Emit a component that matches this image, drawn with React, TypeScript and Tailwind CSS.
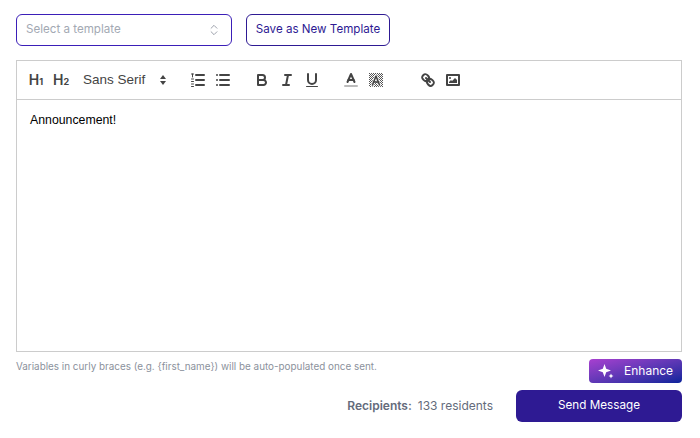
import { ChevronsUpDown } from "lucide-react";

const iconClass = "w-[18px] h-[18px] fill-none stroke-[#444] stroke-2 [stroke-linecap:round] [stroke-linejoin:round]";

function Heading({ n }: { n: string }) {
  return (
    <span className="flex w-[18px] items-baseline justify-center font-['Inter',sans-serif] font-semibold leading-none text-[#444]">
      <span className="text-[14px]">H</span>
      <span className="text-[9px] font-bold">{n}</span>
    </span>
  );
}

function OrderedList() {
  return (
    <svg viewBox="0 0 18 18" className={iconClass}>
      <line x1="7" x2="15" y1="4" y2="4" />
      <line x1="7" x2="15" y1="9" y2="9" />
      <line x1="7" x2="15" y1="14" y2="14" />
      <g className="stroke-1">
        <line x1="2.5" x2="4.5" y1="3" y2="3" />
        <line x1="3.5" x2="3.5" y1="3" y2="6" />
        <line x1="2.5" x2="4.5" y1="8" y2="8" />
        <line x1="2.5" x2="4.5" y1="10.5" y2="10.5" />
        <line x1="2.5" x2="4.5" y1="13" y2="13" />
        <line x1="2.5" x2="4.5" y1="15.5" y2="15.5" />
      </g>
    </svg>
  );
}

function BulletList() {
  return (
    <svg viewBox="0 0 18 18" className={iconClass}>
      <line x1="6" x2="15" y1="4" y2="4" />
      <line x1="6" x2="15" y1="9" y2="9" />
      <line x1="6" x2="15" y1="14" y2="14" />
      <line x1="3" x2="3" y1="4" y2="4" />
      <line x1="3" x2="3" y1="9" y2="9" />
      <line x1="3" x2="3" y1="14" y2="14" />
    </svg>
  );
}

function BoldIcon() {
  return (
    <svg viewBox="0 0 18 18" className={iconClass}>
      <path d="M5,4H9.5A2.5,2.5,0,0,1,12,6.5v0A2.5,2.5,0,0,1,9.5,9H5V4Z" />
      <path d="M5,9h5.5A2.5,2.5,0,0,1,13,11.5v0A2.5,2.5,0,0,1,10.5,14H5V9Z" />
    </svg>
  );
}

function ItalicIcon() {
  return (
    <svg viewBox="0 0 18 18" className={iconClass}>
      <line x1="7" x2="13" y1="4" y2="4" />
      <line x1="5" x2="11" y1="14" y2="14" />
      <line x1="8" x2="10" y1="14" y2="4" />
    </svg>
  );
}

function UnderlineIcon() {
  return (
    <svg viewBox="0 0 18 18" className={iconClass}>
      <path d="M5,3V9a4,4,0,0,0,4,4H9a4,4,0,0,0,4-4V3" />
      <rect x="3" y="15" width="12" height="1" rx="0.5" className="fill-[#444] stroke-0" />
    </svg>
  );
}

function ColorIcon() {
  return (
    <svg viewBox="0 0 18 18" className={iconClass}>
      <line x1="3" x2="15" y1="15" y2="15" className="stroke-[#bbb]" />
      <polyline points="5.5 11 9 3 12.5 11" />
      <line x1="11.63" x2="6.38" y1="9" y2="9" />
    </svg>
  );
}

function BackgroundIcon() {
  // checker of 1px dots behind the letter
  const dots: [number, number][] = [];
  for (let y = 2; y < 16; y++) {
    for (let x = 2; x < 16; x++) {
      if ((x + y) % 2 === 0) dots.push([x, y]);
    }
  }
  return (
    <svg viewBox="0 0 18 18" className={iconClass}>
      {dots.map(([x, y]) => (
        <rect key={`${x}-${y}`} x={x} y={y} width="1" height="1" className="fill-[#555] stroke-0" />
      ))}
      <polyline points="5.5 14 9 5 12.5 14" className="stroke-white stroke-[3]" />
      <polyline points="5.5 14 9 5 12.5 14" className="stroke-[1.6]" />
      <line x1="11.63" x2="6.38" y1="11" y2="11" className="stroke-[1.6]" />
    </svg>
  );
}

function LinkIcon() {
  return (
    <svg viewBox="0 0 18 18" className={iconClass}>
      <line x1="7" x2="11" y1="7" y2="11" />
      <path d="M8.9,4.577a3.476,3.476,0,0,1,.36,4.679A3.476,3.476,0,0,1,4.577,8.9C3.185,7.5,2.035,6.4,4.217,4.217S7.5,3.185,8.9,4.577Z" />
      <path d="M13.423,9.1a3.476,3.476,0,0,0-4.679-.36,3.476,3.476,0,0,0,.36,4.679c1.392,1.392,2.5,2.542,4.679.36S14.815,10.5,13.423,9.1Z" />
    </svg>
  );
}

function ImageIcon() {
  return (
    <svg viewBox="0 0 18 18" className={iconClass}>
      <rect x="3" y="4" width="12" height="10" />
      <circle cx="6" cy="7" r="1" className="fill-[#444] stroke-0" />
      <polyline points="5 12 5 11 7 9 8 10 11 7 13 9 13 12 5 12" className="fill-[#444] stroke-0" />
    </svg>
  );
}

function Sparkle() {
  return (
    <svg viewBox="0 0 18 18" className="w-[18px] h-[18px] fill-white">
      <path d="M7.5 2 L9.2 6.8 L14 8.5 L9.2 10.2 L7.5 15 L5.8 10.2 L1 8.5 L5.8 6.8 Z" />
      <path d="M14 11.5 L14.8 13.2 L16.5 14 L14.8 14.8 L14 16.5 L13.2 14.8 L11.5 14 L13.2 13.2 Z" />
    </svg>
  );
}

export default function App() {
  return (
    <div className="w-[700px] h-[438px] bg-white pl-4 pr-[18px] pt-3.5 font-['Inter',sans-serif] overflow-hidden">
      <div className="flex gap-3.5">
        <div className="flex h-8 w-[216px] items-center justify-between rounded-md border border-[#3b1fb8] pl-[9px] pr-2.5 text-[11.6px] text-[#a3a9b3]">
          <span>Select a template</span>
          <ChevronsUpDown className="w-3.5 h-3.5 text-[#8f95a0]" strokeWidth={1.5} />
        </div>
        <button className="h-8 w-[144px] rounded-md border border-[#2e1a93] bg-white text-[11.6px] text-[#2e1a93]">
          Save as New Template
        </button>
      </div>

      <div className="mt-3.5 h-[292px] border border-[#ccc] flex flex-col">
        <div className="flex h-[39px] shrink-0 items-center border-b border-[#ccc] pl-[10px]">
          <Heading n="1" />
          <div className="ml-[7px]"><Heading n="2" /></div>
          <div className="ml-[13px] flex w-[84px] items-center justify-between font-['Liberation_Sans',sans-serif] text-[13.5px] font-medium text-[#444]">
            <span>Sans Serif</span>
            <span className="mr-[1px] flex flex-col gap-[2px]">
              <span className="h-0 w-0 border-x-[3px] border-b-[4px] border-x-transparent border-b-[#444]" />
              <span className="h-0 w-0 border-x-[3px] border-t-[4px] border-x-transparent border-t-[#444]" />
            </span>
          </div>
          <div className="ml-[22px] flex gap-[7px]">
            <OrderedList />
            <BulletList />
          </div>
          <div className="ml-[21px] flex gap-[7px]">
            <BoldIcon />
            <ItalicIcon />
            <UnderlineIcon />
          </div>
          <div className="ml-[21px] flex gap-[7px]">
            <ColorIcon />
            <BackgroundIcon />
          </div>
          <div className="ml-[34px] flex gap-[7px]">
            <LinkIcon />
            <ImageIcon />
          </div>
        </div>
        <div className="flex-1 px-[13px] pt-[11px] font-['Liberation_Sans',sans-serif] text-[12.3px] leading-[18px] text-black">
          Announcement!
        </div>
      </div>

      <div className="mt-[7px] flex items-start justify-between">
        <p className="text-[9.9px] leading-[14px] text-[#8b919c]">
          Variables in curly braces (e.g. {"{first_name}"}) will be auto-populated once sent.
        </p>
        <button className="flex h-6 w-[93px] items-center rounded bg-gradient-to-br from-[#a83fd0] to-[#06239b] pl-[8px] text-xs text-white">
          <Sparkle />
          <span className="ml-[9px]">Enhance</span>
        </button>
      </div>

      <div className="mt-[7px] flex items-center justify-end">
        <span className="text-xs font-semibold text-[#646b7b]">Recipients:</span>
        <span className="ml-[6px] text-xs text-[#646b7b]">133 residents</span>
        <button className="ml-[23px] h-8 w-[166px] rounded-md bg-[#2e1a93] text-[11.7px] text-white">Send Message</button>
      </div>
    </div>
  );
}
